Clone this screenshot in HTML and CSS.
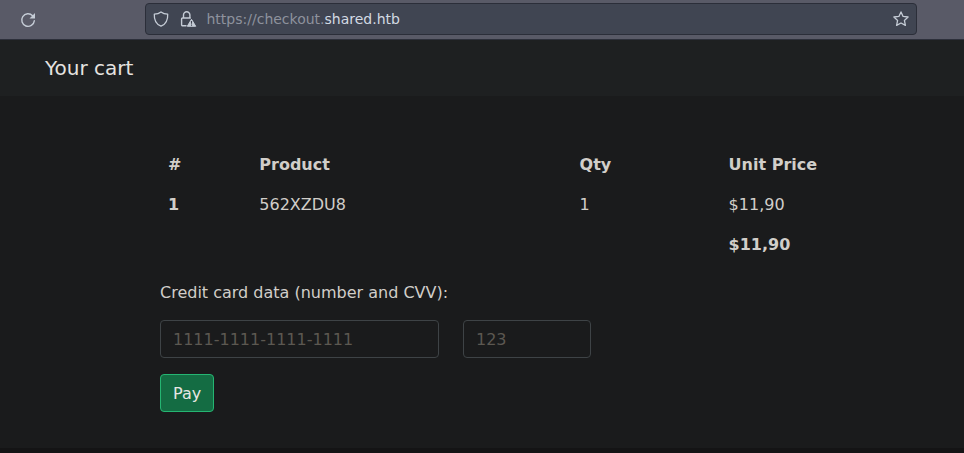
FILE: index.html
```html
<!DOCTYPE html>
<html lang="en">
<head>
<meta charset="utf-8">
<title>Your cart</title>
<link rel="stylesheet" href="styles.css">
</head>
<body>
<div class="toolbar">
  <svg class="reload" width="16" height="16" viewBox="0 0 16 16"><path d="M12.600 3.700A6.300 6.300 0 1 0 14.300 8.800" fill="none" stroke="currentColor" stroke-width="1.400" stroke-linecap="round"/><path d="M15 1v5.500H9.500z" fill="currentColor"/></svg>
  <div class="address">
    <svg width="16" height="16" viewBox="0 0 16 16"><path d="M8 .9C6.200 2.300 4 3 1.300 3.100C1 8.500 3 13.200 8 15.200C13 13.200 15 8.500 14.700 3.100C12 3 9.800 2.300 8 .9z" fill="none" stroke="currentColor" stroke-width="1.300" stroke-linejoin="round"/></svg>
    <svg class="lock" width="17" height="16" viewBox="0 0 17 16"><path d="M3.500 7V4a3.200 3.200 0 0 1 6.400 0v3M6 14.800H2.600a1 1 0 0 1-1-1V8a1 1 0 0 1 1-1h7.700" fill="none" stroke="currentColor" stroke-width="1.400" stroke-linecap="round"/><path d="M11.500 8.300l4.200 7H7.300z" fill="currentColor" stroke="currentColor" stroke-width="1" stroke-linejoin="round"/><path d="M11.500 10v2.700M11.500 13.500v1.200" stroke="#404552" stroke-width="1.100"/></svg>
    <span class="url">https://checkout.<span class="host">shared.htb</span></span>
    <svg class="star" width="16" height="16" viewBox="0 0 16 16"><path d="M8 .9l2.100 4.500 5 .6-3.700 3.400 1 5L8 12l-4.400 2.400 1-5L.9 6l5-.6z" fill="none" stroke="currentColor" stroke-width="1.300" stroke-linejoin="round"/></svg>
  </div>
</div>
<nav class="navbar">Your cart</nav>
<main class="container">
  <table class="cart">
    <thead><tr><th class="num">#</th><th class="product">Product</th><th class="qty">Qty</th><th>Unit Price</th></tr></thead>
    <tbody>
      <tr><th>1</th><td>562XZDU8</td><td>1</td><td>$11,90</td></tr>
      <tr><th></th><td></td><td></td><th>$11,90</th></tr>
    </tbody>
  </table>
  <form>
    <label class="label" for="card">Credit card data (number and CVV):</label>
    <div class="fields">
      <input id="card" class="card" placeholder="1111-1111-1111-1111">
      <input class="cvv" placeholder="123" aria-label="CVV">
    </div>
    <button class="pay" type="button">Pay</button>
  </form>
</main>
<footer class="footer"></footer>
</body>
</html>
```
FILE: styles.css
```css
* { box-sizing: border-box; }
body {
  margin: 0;
  height: 453px;
  display: flex;
  flex-direction: column;
  overflow: hidden;
  background: #1a1b1c;
  color: #d1cec9;
  font: 16px/24px "DejaVu Sans", sans-serif;
}
svg { display: block; flex: none; }
.toolbar {
  flex: none;
  display: flex;
  align-items: center;
  height: 40px;
  padding: 0 47px 2px 20px;
  background: #595a67;
  border-bottom: 1px solid #2d303b;
  color: #c5ccd6;
}
.reload { margin-top: 2px; }
.address {
  display: flex;
  align-items: center;
  width: 772px;
  height: 32px;
  margin-left: 109px;
  padding: 0 7px;
  background: #404552;
  border: 1px solid #2b2e39;
  border-radius: 4px;
}
.lock { margin-left: 11px; }
.url {
  margin-left: 9.500px;
  font-size: 14px;
  line-height: 20px;
  color: #8e929d;
}
.host { color: #d3dae3; }
.star { margin-left: auto; }
.navbar {
  flex: none;
  height: 56px;
  padding: 13px 45px;
  background: #1e2021;
  color: #e5e3e0;
  font-size: 20px;
  line-height: 30px;
}
.container {
  flex: none;
  width: 684px;
  height: 352px;
  margin-left: 160px;
  padding-top: 49px;
}
.cart {
  width: 684px;
  margin-bottom: 16px;
  border-collapse: collapse;
  table-layout: fixed;
}
.cart tr { height: 40px; }
.cart th, .cart td {
  padding: 8px;
  text-align: left;
  vertical-align: top;
}
.num { width: 91.300px; }
.product { width: 320.300px; }
.qty { width: 149px; }
.label { display: block; margin-bottom: 15px; }
.fields { display: flex; gap: 24px; margin-bottom: 16px; }
input, .pay {
  height: 38px;
  margin: 0;
  padding: 6px 12px;
  border: 1px solid #3e4346;
  border-radius: 4px;
  background: #1a1b1c;
  color: #d1cec9;
  font: inherit;
}
input::placeholder { color: #5c5851; opacity: 1; }
.card { width: 279px; }
.cvv { width: 128px; }
.pay {
  display: block;
  padding: 7px 12px 5px;
  background: #146c43;
  border-color: #25b572;
  color: #e8e6e3;
}
.footer { flex: 1; background: #141415; }
```
